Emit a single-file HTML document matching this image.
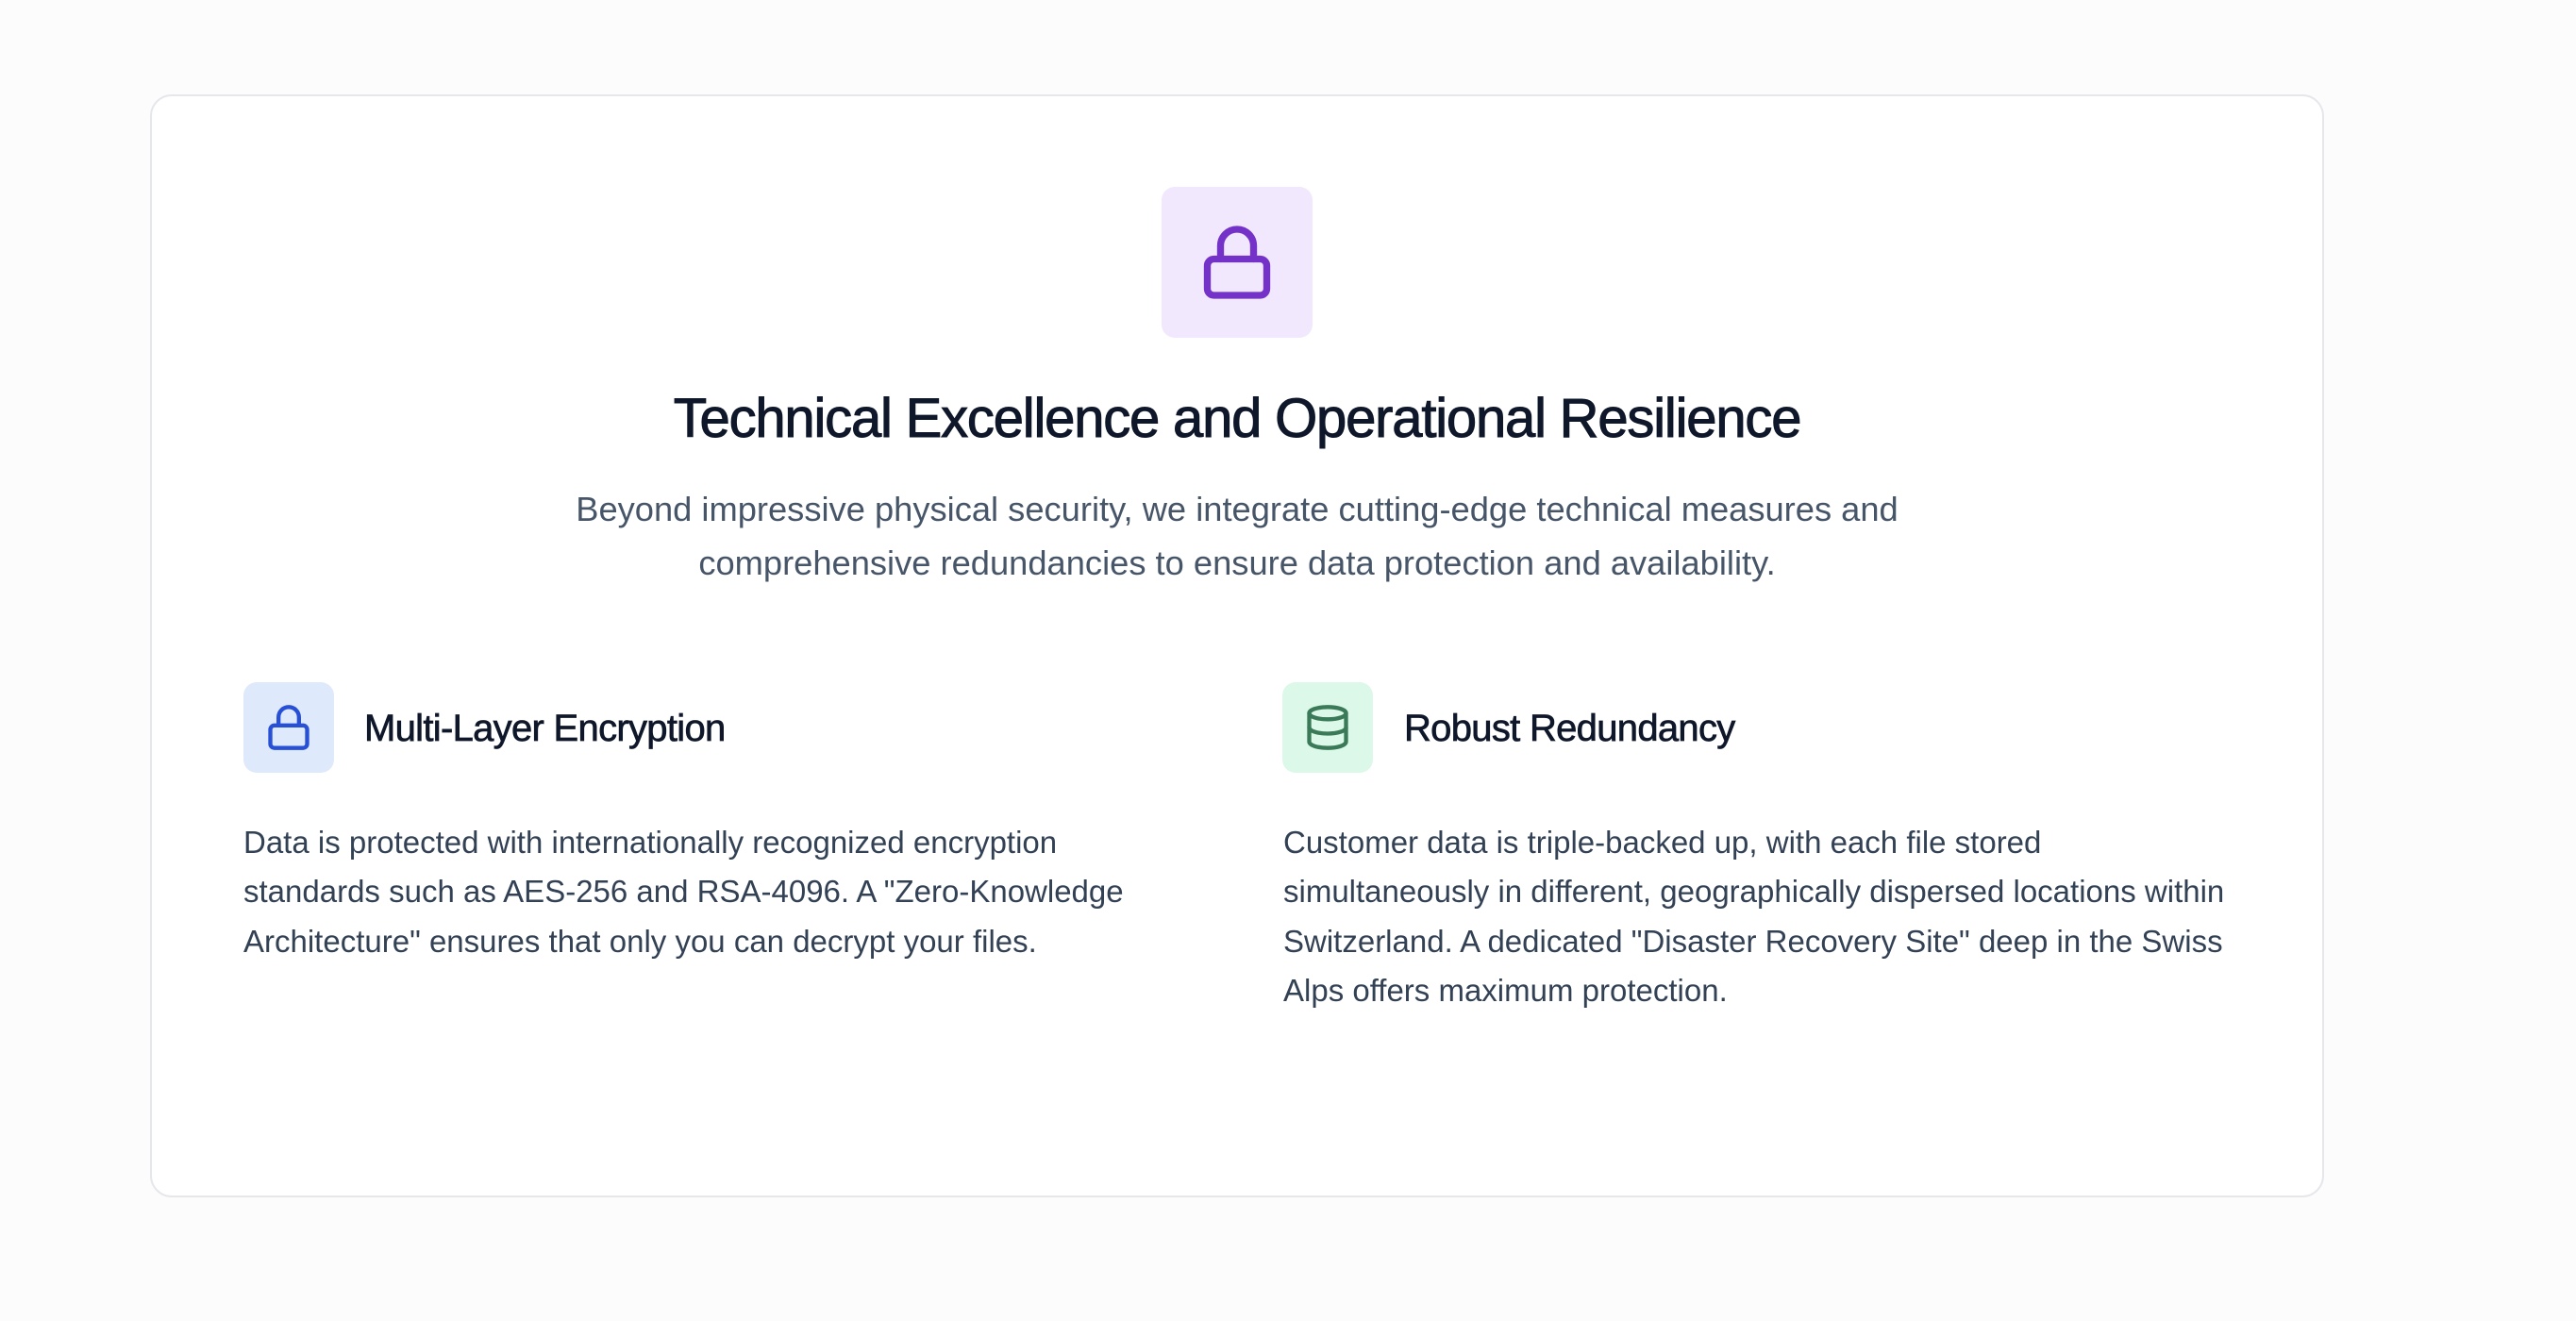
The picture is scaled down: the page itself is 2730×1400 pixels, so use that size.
<!DOCTYPE html>
<html><head><meta charset="utf-8"><style>
html,body{margin:0;padding:0;background:#fcfcfd;width:2730px;height:1400px;overflow:hidden;font-family:"Liberation Sans",sans-serif}
.card{position:absolute;left:159px;top:100px;width:2304px;height:1169px;background:#fff;border:2px solid #e5e7eb;border-radius:23px;box-sizing:border-box}
.abs{position:absolute}
.big{left:1231px;top:198px;width:160px;height:160px;background:#f1e8fd;border-radius:14px;display:flex;align-items:center;justify-content:center}
h1{position:absolute;left:0;width:2622px;top:404px;margin:0;text-align:center;font-size:58px;font-weight:500;color:#0f172a;letter-spacing:-1.2px;line-height:80px;-webkit-text-stroke:1px #0f172a}
.lead{position:absolute;left:0;width:2622px;top:511px;text-align:center;font-size:36.3px;line-height:57px;color:#475569}
.ib{width:96px;height:96px;border-radius:14px;display:flex;align-items:center;justify-content:center;top:723px}
.t{top:747px;font-size:40px;line-height:50px;color:#0f172a;letter-spacing:-0.7px;font-weight:500;-webkit-text-stroke:0.7px #0f172a}
.b{top:867px;font-size:33px;line-height:52.3px;color:#334155;white-space:nowrap}
</style></head><body>
<div class="card"></div>
<div class="abs big"><svg width="84" height="84" viewBox="0 0 24 24" fill="none" stroke="#7432c8" stroke-width="2.1" stroke-linecap="round" stroke-linejoin="round"><rect x="3" y="11" width="18" height="11" rx="2"/><path d="M7 11V7a5 5 0 0 1 10 0v4"/></svg></div>
<h1>Technical Excellence and Operational Resilience</h1>
<div class="lead">Beyond impressive physical security, we integrate cutting-edge technical measures and<br>comprehensive redundancies to ensure data protection and availability.</div>

<div class="abs ib" style="left:258px;background:#dfe9fc"><svg width="52" height="52" viewBox="0 0 24 24" fill="none" stroke="#2750d6" stroke-width="2" stroke-linecap="round" stroke-linejoin="round"><rect x="3" y="11" width="18" height="11" rx="2"/><path d="M7 11V7a5 5 0 0 1 10 0v4"/></svg></div>
<div class="abs t" style="left:386px">Multi-Layer Encryption</div>
<div class="abs b" style="left:258px">Data is protected with internationally recognized encryption<br>standards such as AES-256 and RSA-4096. A "Zero-Knowledge<br>Architecture" ensures that only you can decrypt your files.</div>

<div class="abs ib" style="left:1359px;background:#dcf8e8"><svg width="52" height="52" viewBox="0 0 24 24" fill="none" stroke="#3a7a58" stroke-width="2" stroke-linecap="round" stroke-linejoin="round"><ellipse cx="12" cy="5" rx="9" ry="3"/><path d="M3 5V19A9 3 0 0 0 21 19V5"/><path d="M3 12A9 3 0 0 0 21 12"/></svg></div>
<div class="abs t" style="left:1488px">Robust Redundancy</div>
<div class="abs b" style="left:1360px">Customer data is triple-backed up, with each file stored<br>simultaneously in different, geographically dispersed locations within<br>Switzerland. A dedicated "Disaster Recovery Site" deep in the Swiss<br>Alps offers maximum protection.</div>
</body></html>
